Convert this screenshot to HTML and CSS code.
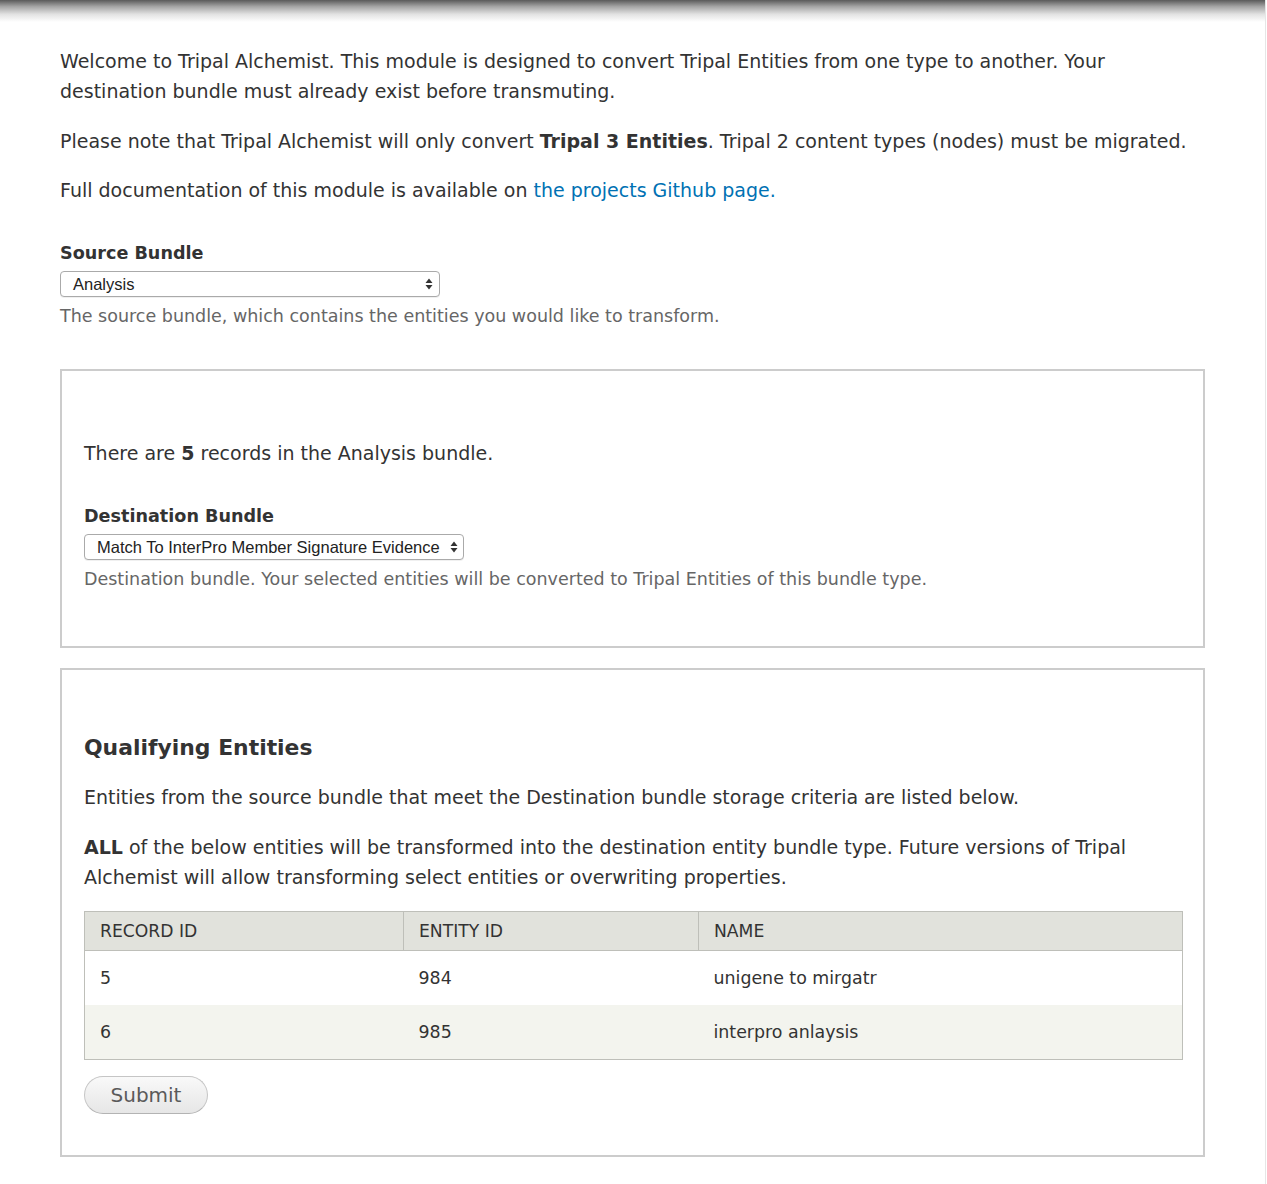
FILE: index.html
```html
<!DOCTYPE html>
<html lang="en">
<head>
<meta charset="utf-8">
<title>Tripal Alchemist</title>
<link rel="stylesheet" href="styles.css">
</head>
<body>
<div class="page">
  <div class="topshadow"></div>
  <div class="content">
    <p>Welcome to Tripal Alchemist. This module is designed to convert Tripal Entities from one type to another. Your destination bundle must already exist before transmuting.</p>
    <p>Please note that Tripal Alchemist will only convert <strong>Tripal 3 Entities</strong>. Tripal 2 content types (nodes) must be migrated.</p>
    <p>Full documentation of this module is available on <a href="#">the projects Github page.</a></p>

    <div class="form-item first">
      <label class="label">Source Bundle</label>
      <div class="select w-source"><span>Analysis</span><svg class="arrows" width="8" height="12" viewBox="0 0 8 12"><path d="M4 0.5 L7.5 5 L0.5 5 Z M4 11.5 L7.5 7 L0.5 7 Z" fill="#333"/></svg></div>
      <div class="desc">The source bundle, which contains the entities you would like to transform.</div>
    </div>

    <div class="fieldset fs-dest">
      <p class="records">There are <strong>5</strong> records in the Analysis bundle.</p>
      <div class="form-item">
        <label class="label">Destination Bundle</label>
        <div class="select w-dest"><span>Match To InterPro Member Signature Evidence</span><svg class="arrows" width="8" height="12" viewBox="0 0 8 12"><path d="M4 0.5 L7.5 5 L0.5 5 Z M4 11.5 L7.5 7 L0.5 7 Z" fill="#333"/></svg></div>
        <div class="desc">Destination bundle. Your selected entities will be converted to Tripal Entities of this bundle type.</div>
      </div>
    </div>

    <div class="fieldset fs-qual">
      <h2>Qualifying Entities</h2>
      <p>Entities from the source bundle that meet the Destination bundle storage criteria are listed below.</p>
      <p><strong>ALL</strong> of the below entities will be transformed into the destination entity bundle type. Future versions of Tripal Alchemist will allow transforming select entities or overwriting properties.</p>
      <table class="tbl">
        <thead>
          <tr><th class="c1">RECORD ID</th><th class="c2">ENTITY ID</th><th>NAME</th></tr>
        </thead>
        <tbody>
          <tr class="odd"><td>5</td><td>984</td><td>unigene to mirgatr</td></tr>
          <tr class="even"><td>6</td><td>985</td><td>interpro anlaysis</td></tr>
        </tbody>
      </table>
      <button class="btn">Submit</button>
    </div>
  </div>
</div>
</body>
</html>
```
FILE: styles.css
```css
html, body {
  margin: 0;
  padding: 0;
  background: #fff;
}
body {
  font-family: "DejaVu Sans", Verdana, sans-serif;
  font-size: 19px;
  color: #333;
}
.page {
  width: 1265px;
  min-height: 1184px;
  border-right: 1px solid #e6e6e6;
}
.topshadow {
  height: 22px;
  background: linear-gradient(to bottom, #5a5a5a 0%, #a5a5a5 30%, #e2e2e2 65%, #ffffff 100%);
}
.content {
  padding: 24px 60px 0 60px;
}
p {
  margin: 0 0 19.5px 0;
  line-height: 30px;
}
strong { font-weight: bold; }
a {
  color: #0071b3;
  text-decoration: none;
}
.form-item.first {
  margin-top: 37px;
}
.label {
  display: block;
  font-weight: bold;
  font-size: 17.6px;
  line-height: 22px;
  margin-bottom: 7px;
}
.select {
  box-sizing: border-box;
  height: 26px;
  border: 1px solid #aaa;
  border-radius: 4px;
  background: #fff;
  box-shadow: 0 1px 0 rgba(0,0,0,0.06);
  font-family: "Liberation Sans", Arial, sans-serif;
  font-size: 16.5px;
  color: #222;
  display: flex;
  align-items: center;
  justify-content: space-between;
  padding: 0 6px 0 12px;
}
.w-source { width: 380px; }
.w-dest { width: 380px; padding-right: 5px; }
.arrows {
  flex: none;
}
.desc {
  color: #666;
  font-size: 17.5px;
  line-height: 22px;
  margin-top: 8px;
}
.fieldset {
  border: 2px solid #ccc;
  margin-top: 42px;
  padding: 0 20px 0 22px;
}
.fs-dest {
  height: 279px;
  box-sizing: border-box;
  padding-top: 67px;
}
.records {
  margin-bottom: 37px;
}
.fs-qual {
  margin-top: 20px;
  height: 489px;
  box-sizing: border-box;
  padding-top: 63px;
}
h2 {
  margin: 0 0 19px 0;
  font-size: 21.9px;
  line-height: 30px;
  font-weight: bold;
}
.tbl {
  width: 100%;
  border-collapse: collapse;
  border: 1px solid #bebfb9;
  margin-top: 0;
}
.tbl th {
  background: #e1e2dc;
  border-bottom: 1px solid #bebfb9;
  border-right: 1px solid #bebfb9;
  text-align: left;
  font-weight: normal;
  height: 38px;
  padding: 0 15px;
  font-size: 17.2px;
}
.tbl th:last-child { border-right: 0; }
.tbl th.c1 { width: 288px; }
.tbl th.c2 { width: 264px; }
.tbl td {
  padding: 0 15px;
  height: 54px;
  font-size: 17.4px;
}
.tbl tr.odd td { background: #fff; }
.tbl tr.even td { background: #f3f4ee; }
.btn {
  display: block;
  margin-top: 16px;
  width: 124px;
  height: 38px;
  border: 1px solid #c5c5c5;
  border-bottom-color: #b3b3b3;
  border-radius: 20px;
  background: linear-gradient(to bottom, #f9f9f9, #e6e6e6);
  color: #5a5a5a;
  font-family: "DejaVu Sans", Verdana, sans-serif;
  font-size: 20px;
  padding: 0;
}
```
